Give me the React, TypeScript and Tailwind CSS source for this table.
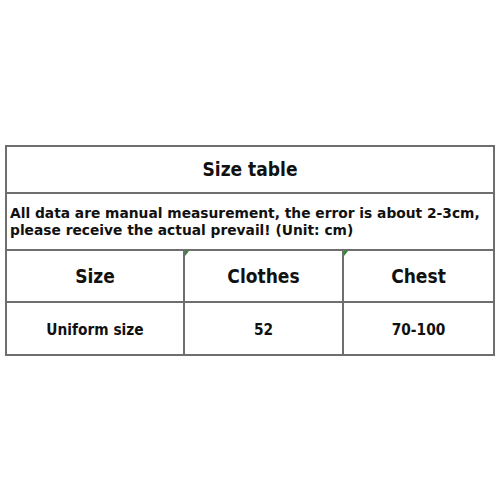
const rows = [{ size: 'Uniform size', clothes: '52', chest: '70-100' }];

const cond = { fontFamily: '"DejaVu Sans Condensed", "DejaVu Sans", Verdana, sans-serif', fontStretch: 'condensed' };

function Tick() {
  return (
    <span className="absolute top-0 left-0 h-0 w-0 border-r-[4px] border-t-[5px] border-r-transparent border-t-[#2e8b2e]" />
  );
}

export default function App() {
  return (
    <div
      className="h-[500px] w-[500px] bg-white pt-[145px] pl-[5px] text-[#111]"
      style={{ fontFamily: '"DejaVu Sans", Verdana, sans-serif' }}
    >
      <div className="w-[490px] border-2 border-[#6e6e6e] font-bold">
        <div style={cond} className="flex h-[47px] items-center justify-center border-b-2 border-[#6e6e6e] text-[19px]">
          Size table
        </div>
        <div className="flex h-[57px] items-center border-b-2 border-[#6e6e6e] px-[3px] text-[13.8px] leading-[17px]">
          <p>
            All data are manual measurement, the error is about 2-3cm,
            <br />
            please receive the actual prevail! (Unit: cm)
          </p>
        </div>
        <div style={cond} className="grid h-[52px] grid-cols-[176px_159px_1fr] border-b-2 border-[#6e6e6e] text-[19px]">
          <div className="flex items-center justify-center">Size</div>
          <div className="relative flex items-center justify-center border-l-2 border-[#6e6e6e]">
            <Tick />
            Clothes
          </div>
          <div className="relative flex items-center justify-center border-l-2 border-[#6e6e6e]">
            <Tick />
            Chest
          </div>
        </div>
        {rows.map((r) => (
          <div key={r.size} style={cond} className="grid h-[51px] grid-cols-[176px_159px_1fr] text-[15.3px]">
            <div className="flex items-center justify-center pt-[3px]">{r.size}</div>
            <div className="flex items-center justify-center border-l-2 border-[#6e6e6e] pt-[3px]">{r.clothes}</div>
            <div className="flex items-center justify-center border-l-2 border-[#6e6e6e] pt-[3px]">{r.chest}</div>
          </div>
        ))}
      </div>
    </div>
  );
}
